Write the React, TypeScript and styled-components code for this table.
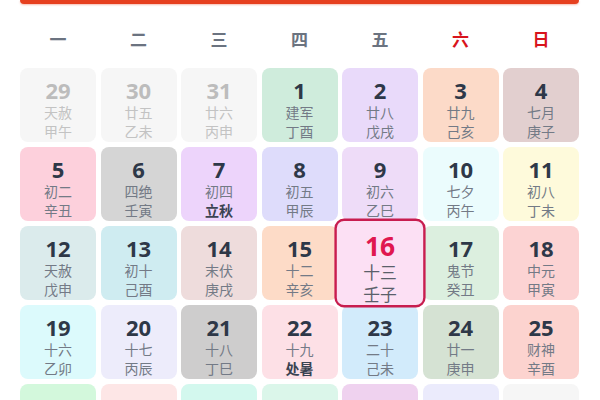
import React from "react";
import styled, { createGlobalStyle, css } from "styled-components";

const Global = createGlobalStyle`
  html, body { margin: 0; padding: 0; background: #ffffff; }
  body { font-family: "Open Sans", "Noto Sans CJK SC", sans-serif; overflow: hidden; }
`;

const Page = styled.div`
  width: 600px;
  height: 400px;
  overflow: hidden;
  padding: 0 21px 0 20px;
  box-sizing: border-box;
`;

const TopBar = styled.div`
  height: 4px;
  background: #e6401f;
  border-radius: 0 0 6px 6px;
  box-shadow: 0 1px 2px rgba(230, 64, 31, 0.35);
`;

const WeekRow = styled.div`
  display: grid;
  grid-template-columns: repeat(7, 1fr);
  column-gap: 4.5px;
  margin-top: 23px;
  height: 24px;
`;

const WeekLabel = styled.div<{ $weekend?: boolean }>`
  text-align: center;
  font-family: "Noto Sans CJK SC", sans-serif;
  font-weight: 700;
  font-size: 17px;
  line-height: 24px;
  color: ${(p) => (p.$weekend ? "#d8141c" : "#6b7380")};
`;

const Grid = styled.div`
  display: grid;
  grid-template-columns: repeat(7, 76px);
  grid-auto-rows: 74px;
  column-gap: 4.5px;
  row-gap: 5px;
  margin-top: 17px;
`;

const Cell = styled.div<{ $bg: string; $today?: boolean }>`
  position: relative;
  background: ${(p) => p.$bg};
  border-radius: 8px;
  box-sizing: border-box;
  display: flex;
  flex-direction: column;
  align-items: center;
  padding-top: 9px;
  ${(p) =>
    p.$today &&
    css`
      transform: scale(1.2);
      z-index: 2;
      border: 2px solid #c81d4f;
      padding-top: 7px;
    `}
`;

const DayNum = styled.div<{ $faded?: boolean; $today?: boolean }>`
  font-family: "Open Sans", "Noto Sans", sans-serif;
  font-weight: 700;
  font-size: 22px;
  line-height: 26px;
  color: ${(p) => (p.$faded ? "#bcbcbc" : p.$today ? "#e0174f" : "#2e3848")};
`;

const Lunar = styled.div<{ $faded?: boolean; $strong?: boolean; $today?: boolean }>`
  font-family: "Noto Sans CJK SC", sans-serif;
  font-size: 14px;
  line-height: 18.5px;
  font-weight: ${(p) => (p.$strong ? 700 : 400)};
  color: ${(p) =>
    p.$faded ? "#c3c3c3" : p.$strong ? "#3b4352" : p.$today ? "#5a5f6a" : "#737a86"};
`;

type Day = {
  n: string;
  a: string;
  b: string;
  bg: string;
  faded?: boolean;
  strongB?: boolean;
  today?: boolean;
};

const days: Day[] = [
  { n: "29", a: "天赦", b: "甲午", bg: "#f6f6f6", faded: true },
  { n: "30", a: "廿五", b: "乙未", bg: "#f6f6f6", faded: true },
  { n: "31", a: "廿六", b: "丙申", bg: "#f6f6f6", faded: true },
  { n: "1", a: "建军", b: "丁酉", bg: "#cfecdc" },
  { n: "2", a: "廿八", b: "戊戌", bg: "#e9dafa" },
  { n: "3", a: "廿九", b: "己亥", bg: "#fcdac8" },
  { n: "4", a: "七月", b: "庚子", bg: "#e2cfcf" },
  { n: "5", a: "初二", b: "辛丑", bg: "#fdd0dc" },
  { n: "6", a: "四绝", b: "壬寅", bg: "#d5d5d5" },
  { n: "7", a: "初四", b: "立秋", bg: "#edd4fb", strongB: true },
  { n: "8", a: "初五", b: "甲辰", bg: "#dedcfb" },
  { n: "9", a: "初六", b: "乙巳", bg: "#eedcf8" },
  { n: "10", a: "七夕", b: "丙午", bg: "#ebfcfd" },
  { n: "11", a: "初八", b: "丁未", bg: "#fefadb" },
  { n: "12", a: "天赦", b: "戊申", bg: "#dbebec" },
  { n: "13", a: "初十", b: "己酉", bg: "#cfecf1" },
  { n: "14", a: "末伏", b: "庚戌", bg: "#eedcdc" },
  { n: "15", a: "十二", b: "辛亥", bg: "#fddbc7" },
  { n: "16", a: "十三", b: "壬子", bg: "#fce0f4", today: true },
  { n: "17", a: "鬼节", b: "癸丑", bg: "#dcefdf" },
  { n: "18", a: "中元", b: "甲寅", bg: "#fcd3d3" },
  { n: "19", a: "十六", b: "乙卯", bg: "#dcfafc" },
  { n: "20", a: "十七", b: "丙辰", bg: "#edecfb" },
  { n: "21", a: "十八", b: "丁巳", bg: "#cecdcd" },
  { n: "22", a: "十九", b: "处暑", bg: "#fde0e6", strongB: true },
  { n: "23", a: "二十", b: "己未", bg: "#d2ebfb" },
  { n: "24", a: "廿一", b: "庚申", bg: "#d5e2d3" },
  { n: "25", a: "财神", b: "辛酉", bg: "#fcd3cf" },
  { n: "26", a: "廿二", b: "壬戌", bg: "#d3f8dc" },
  { n: "27", a: "廿三", b: "癸亥", bg: "#fde6e6" },
  { n: "28", a: "廿四", b: "甲子", bg: "#d3f8ee" },
  { n: "29", a: "廿五", b: "乙丑", bg: "#dbf6ea" },
  { n: "30", a: "廿六", b: "丙寅", bg: "#efd2ef" },
  { n: "31", a: "廿七", b: "丁卯", bg: "#ebebfc" },
  { n: "1", a: "廿八", b: "戊辰", bg: "#f6f6f6", faded: true },
];

const weekNames = ["一", "二", "三", "四", "五", "六", "日"];

export default function App() {
  return (
    <>
      <Global />
      <Page>
        <TopBar />
        <WeekRow>
          {weekNames.map((w, i) => (
            <WeekLabel key={w} $weekend={i >= 5}>
              {w}
            </WeekLabel>
          ))}
        </WeekRow>
        <Grid>
          {days.map((d, i) => (
            <Cell key={i} $bg={d.bg} $today={d.today}>
              <DayNum $faded={d.faded} $today={d.today}>
                {d.n}
              </DayNum>
              <Lunar $faded={d.faded} $today={d.today}>
                {d.a}
              </Lunar>
              <Lunar $faded={d.faded} $today={d.today} $strong={d.strongB}>
                {d.b}
              </Lunar>
            </Cell>
          ))}
        </Grid>
      </Page>
    </>
  );
}
